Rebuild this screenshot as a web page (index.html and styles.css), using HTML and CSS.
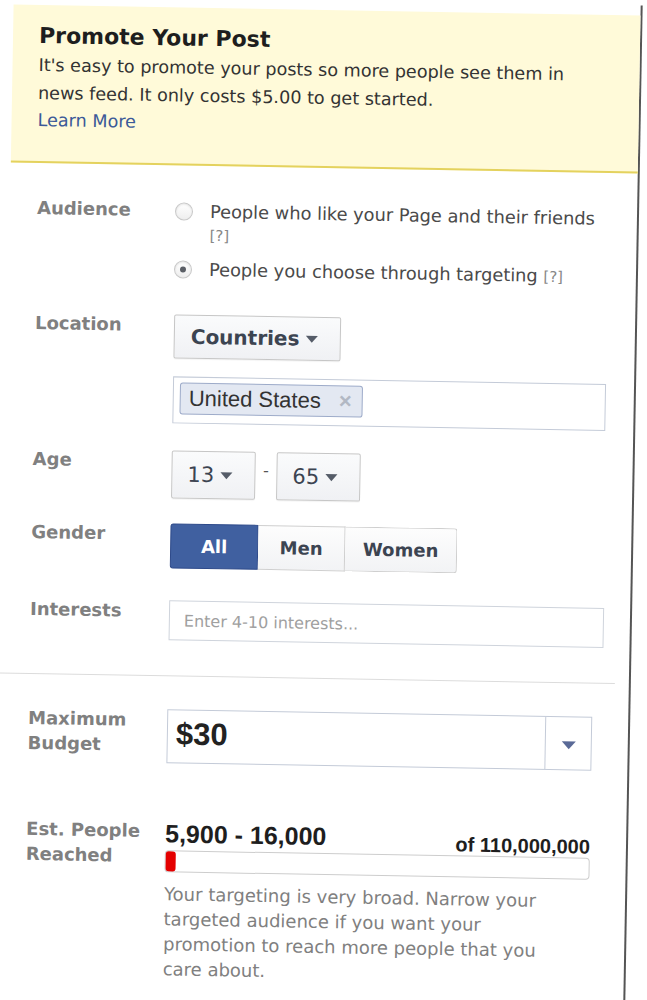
FILE: index.html
```html
<!DOCTYPE html>
<html lang="en">
<head>
    <meta charset="UTF-8">
    <meta name="viewport" content="width=device-width, initial-scale=1.0">
    <title>Promote Your Post</title>
    <link rel="stylesheet" href="styles.css">
</head>
<body>
    <div class="panel">
        <div class="promo">
            <h1>Promote Your Post</h1>
            <p>It's easy to promote your posts so more people see them in<br>news feed. It only costs $5.00 to get started.</p>
            <a class="learn-more" href="#">Learn More</a>
        </div>

        <div class="targeting">
            <div class="row row-audience">
                <div class="label">Audience</div>
                <div class="field">
                    <div class="radio-option">
                        <span class="radio"></span>
                        <span class="radio-text">People who like your Page and their friends <span class="help">[?]</span></span>
                    </div>
                    <div class="radio-option">
                        <span class="radio checked"></span>
                        <span class="radio-text">People you choose through targeting <span class="help">[?]</span></span>
                    </div>
                </div>
            </div>

            <div class="row row-location">
                <div class="label">Location</div>
                <div class="field">
                    <div class="select-btn countries">Countries <span class="caret"></span></div>
                    <div class="token-box">
                        <span class="token">United States <span class="token-x">&times;</span></span>
                    </div>
                </div>
            </div>

            <div class="row row-age">
                <div class="label">Age</div>
                <div class="field age-field">
                    <div class="select-btn age">13 <span class="caret"></span></div>
                    <span class="dash">-</span>
                    <div class="select-btn age">65 <span class="caret"></span></div>
                </div>
            </div>

            <div class="row row-gender">
                <div class="label">Gender</div>
                <div class="field">
                    <div class="segmented">
                        <span class="seg seg-all active">All</span>
                        <span class="seg seg-men">Men</span>
                        <span class="seg seg-women">Women</span>
                    </div>
                </div>
            </div>

            <div class="row row-interests">
                <div class="label">Interests</div>
                <div class="field">
                    <div class="text-input">Enter 4-10 interests...</div>
                </div>
            </div>
        </div>

        <div class="budget">
            <div class="row row-budget">
                <div class="label label-2line">Maximum<br>Budget</div>
                <div class="field">
                    <div class="budget-select">
                        <span class="budget-value">$30</span>
                        <span class="budget-drop"><span class="budget-caret"></span></span>
                    </div>
                </div>
            </div>

            <div class="row row-reach">
                <div class="label label-2line">Est. People<br>Reached</div>
                <div class="field">
                    <div class="reach-head">
                        <span class="reach-range">5,900 - 16,000</span>
                        <span class="reach-total">of 110,000,000</span>
                    </div>
                    <div class="reach-bar"><div class="reach-fill" style="width: 10px;"></div></div>
                    <p class="reach-note">Your targeting is very broad. Narrow your targeted audience if you want your promotion to reach more people that you care about.</p>
                </div>
            </div>
        </div>
    </div>
</body>
</html>
```

FILE: styles.css
```css
body {
    margin: 0;
    background: #fff;
    color: #333;
    font-family: "DejaVu Sans", sans-serif;
    overflow: hidden;
}
.panel {
    width: 634px;
    height: 1000px;
    box-sizing: border-box;
    padding-top: 10px;
    border-right: 2px solid #555;
    transform: rotate(1deg);
    transform-origin: 323px 500px;
}

/* yellow intro box */
.promo {
    margin-left: 5px;
    height: 158px;
    box-sizing: border-box;
    padding: 17px 20px 0 26px;
    background-color: #fffad9;
    border-bottom: 2px solid #e4d25e;
}
.promo h1 {
    margin: 0;
    font-size: 22px;
    line-height: 28px;
    color: #1e1e1e;
}
.promo p {
    margin: 1px 0 0;
    font-size: 17.6px;
    line-height: 28px;
    color: #333;
}
.learn-more {
    display: block;
    font-size: 17.6px;
    line-height: 27px;
    color: #3b5998;
    text-decoration: none;
}

/* form rows */
.targeting {
    padding: 34px 0 0 32px;
}
.row {
    display: flex;
    align-items: flex-start;
}
.label {
    width: 139px;
    flex-shrink: 0;
    font-size: 18px;
    font-weight: bold;
    line-height: 22px;
    color: #808080;
}
.field {
    flex: 1;
}
.row-location { margin-top: 32px; }
.row-age { margin-top: 27px; }
.row-gender { margin-top: 25px; }
.row-interests { margin-top: 32px; }

/* audience radios */
.radio-option {
    display: flex;
    align-items: flex-start;
}
.radio-option + .radio-option {
    margin-top: 10px;
}
.radio {
    width: 16px;
    height: 16px;
    margin: 3px 17px 0 -1px;
    flex-shrink: 0;
    border: 1px solid #c8c8c8;
    border-radius: 50%;
    background: linear-gradient(#fff, #eeeeee);
    box-shadow: inset 0 1px 2px rgba(0, 0, 0, 0.1);
    position: relative;
}
.radio.checked::after {
    content: '';
    position: absolute;
    left: 5px;
    top: 5px;
    width: 6px;
    height: 6px;
    border-radius: 50%;
    background: #5b5f66;
}
.radio-text {
    width: 400px;
    font-size: 17.8px;
    line-height: 23px;
    color: #4a4a4a;
}
.help {
    font-size: 15px;
    color: #888;
}

/* location */
.select-btn {
    display: inline-flex;
    align-items: center;
    box-sizing: border-box;
    border: 1px solid #c6c6c6;
    border-radius: 2px;
    background: linear-gradient(#fafbfc, #f0f1f4);
    box-shadow: 0 1px 1px rgba(0, 0, 0, 0.05);
    color: #3c4451;
}
.caret {
    display: inline-block;
    margin-left: 6px;
    border-left: 6px solid transparent;
    border-right: 6px solid transparent;
    border-top: 7px solid #555c68;
}
.countries {
    width: 167px;
    height: 44px;
    padding-left: 16px;
    font-size: 20px;
    font-weight: bold;
}
.token-box {
    margin-top: 18px;
    width: 433px;
    height: 47px;
    box-sizing: border-box;
    border: 1px solid #c4cbd8;
    padding: 5px 0 0 6px;
}
.token {
    display: inline-flex;
    align-items: center;
    height: 32px;
    box-sizing: border-box;
    padding: 0 10px 0 8px;
    border: 1px solid #9dabc9;
    border-radius: 3px;
    background: #e3e8f2;
    font-family: "Liberation Sans", Arial, sans-serif;
    font-size: 22px;
    color: #333;
}
.token-x {
    margin-left: 18px;
    font-size: 22px;
    font-weight: bold;
    color: #b2b8c4;
}

/* age */
.age-field {
    display: flex;
    align-items: center;
}
.age {
    width: 84px;
    height: 48px;
    padding-left: 15px;
    font-size: 21px;
}
.dash {
    width: 21px;
    text-align: center;
    font-size: 16px;
    color: #555;
    margin-top: -12px;
}

/* gender */
.segmented {
    display: flex;
    height: 45px;
}
.seg {
    display: flex;
    align-items: center;
    justify-content: center;
    box-sizing: border-box;
    border: 1px solid #cfcfcf;
    border-left: none;
    background: linear-gradient(#fdfdfd, #f2f3f5);
    font-size: 18px;
    font-weight: bold;
    color: #3c4451;
}
.seg-all { width: 88px; border-left: 1px solid #2e4a8a; border-color: #2e4a8a; border-radius: 3px 0 0 3px; }
.seg-men { width: 87px; }
.seg-women { width: 112px; border-radius: 0 3px 3px 0; }
.seg.active {
    background: #4060a0;
    color: #fff;
}

/* interests */
.text-input {
    width: 435px;
    height: 40px;
    box-sizing: border-box;
    border: 1px solid #cfd4dc;
    padding: 0 14px;
    display: flex;
    align-items: center;
    font-size: 16px;
    color: #a0a0a0;
}

/* budget section */
.budget {
    margin-top: 35px;
    margin-right: 14px;
    border-top: 1px solid #dcdcdc;
    padding: 33px 0 0 32px;
}
.label-2line {
    line-height: 25px;
    margin-top: -2px;
}
.budget-select {
    display: flex;
    width: 425px;
    height: 54px;
    box-sizing: border-box;
    border: 1px solid #c4cbd8;
}
.budget-value {
    flex: 1;
    padding: 6px 0 0 8px;
    font-family: "Liberation Sans", Arial, sans-serif;
    font-size: 31px;
    font-weight: bold;
    color: #222;
}
.budget-drop {
    width: 45px;
    border-left: 1px solid #c4cbd8;
    display: flex;
    align-items: center;
    justify-content: center;
}
.budget-caret {
    border-left: 7px solid transparent;
    border-right: 7px solid transparent;
    border-top: 8px solid #5a6a97;
    margin-top: 4px;
}

.row-reach {
    margin-top: 57px;
}
.reach-head {
    width: 425px;
    display: flex;
    justify-content: space-between;
    align-items: baseline;
    font-family: "Liberation Sans", Arial, sans-serif;
    font-weight: bold;
    color: #1e1e1e;
}
.reach-range {
    font-size: 25px;
    line-height: 26px;
}
.reach-total {
    font-size: 20px;
    position: relative;
    top: 4px;
}
.reach-bar {
    margin-top: 3px;
    width: 425px;
    height: 22px;
    box-sizing: border-box;
    border: 1px solid #cdcdcd;
    border-radius: 4px;
    background: #fff;
}
.reach-fill {
    height: 100%;
    border-radius: 3px;
    background: #e40000;
}
.reach-note {
    margin: 9px 0 0;
    width: 395px;
    font-size: 18px;
    line-height: 25px;
    color: #808080;
}
```
